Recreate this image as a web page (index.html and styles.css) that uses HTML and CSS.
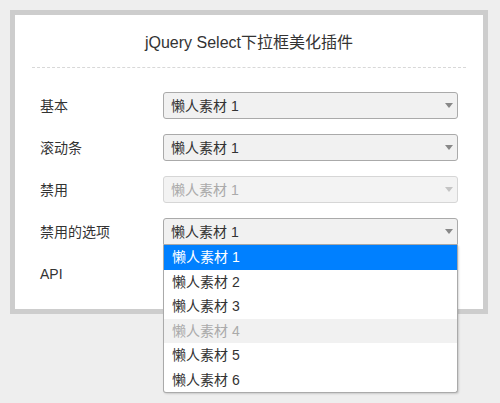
FILE: index.html
```html
<!DOCTYPE html>
<html lang="zh">
<head>
<meta charset="utf-8">
<title>jQuery Select下拉框美化插件</title>
<link rel="stylesheet" href="styles.css">
</head>
<body>
<div class="card">
  <h1 class="title">jQuery Select下拉框美化插件</h1>
  <div class="form">
    <div class="row">
      <span class="label">基本</span>
      <div class="select"><span class="value">懒人素材 1</span><span class="arrow"></span></div>
    </div>
    <div class="row">
      <span class="label">滚动条</span>
      <div class="select"><span class="value">懒人素材 1</span><span class="arrow"></span></div>
    </div>
    <div class="row">
      <span class="label">禁用</span>
      <div class="select disabled"><span class="value">懒人素材 1</span><span class="arrow"></span></div>
    </div>
    <div class="row">
      <span class="label">禁用的选项</span>
      <div class="select open"><span class="value">懒人素材 1</span><span class="arrow"></span>
        <ul class="options">
          <li class="option selected">懒人素材 1</li>
          <li class="option">懒人素材 2</li>
          <li class="option">懒人素材 3</li>
          <li class="option is-disabled">懒人素材 4</li>
          <li class="option">懒人素材 5</li>
          <li class="option">懒人素材 6</li>
        </ul>
      </div>
    </div>
    <div class="row">
      <span class="label">API</span>
    </div>
  </div>
</div>
</body>
</html>
```
FILE: styles.css
```css
html, body {
  margin: 0;
  padding: 0;
  background: #eeeeee;
  font-family: "Liberation Sans", Arial, "Noto Sans CJK SC", sans-serif;
  color: #333;
}
body {
  width: 500px;
  height: 403px;
  overflow: hidden;
}
.card {
  margin: 10px;
  width: 478px;
  height: 304px;
  box-sizing: border-box;
  border: 5px solid #cdcdcd;
  background: #fff;
}
.title {
  margin: 0 17px;
  padding: 18px 0 14px;
  font-size: 16px;
  font-weight: normal;
  line-height: 20px;
  text-align: center;
  color: #333;
  border-bottom: 1px dashed #d8d8d8;
}
.form {
  padding: 24px 25px 0 25px;
}
.row {
  display: flex;
  align-items: center;
  height: 27px;
  margin-bottom: 15px;
}
.label {
  width: 123px;
  font-size: 14px;
  line-height: 20px;
  color: #333;
}
.select {
  position: relative;
  width: 295px;
  height: 27px;
  box-sizing: border-box;
  border: 1px solid #aaa;
  border-radius: 3px;
  background: #f1f1f1;
  display: flex;
  align-items: center;
  padding-left: 7px;
  font-size: 14px;
  color: #333;
}
.select .value {
  flex: 1;
  line-height: 20px;
}
.arrow {
  width: 0;
  height: 0;
  margin-right: 4px;
  border-left: 4px solid transparent;
  border-right: 4px solid transparent;
  border-top: 5px solid #888;
}
.select.disabled {
  border-color: #d6d6d6;
  color: #aaa;
  background: #f3f3f3;
}
.select.disabled .arrow {
  border-top-color: #c4c4c4;
}
.select.open {
  border-radius: 3px 3px 0 0;
}
.options {
  position: absolute;
  left: -1px;
  top: 26px;
  width: 295px;
  box-sizing: border-box;
  margin: 0;
  padding: 0;
  list-style: none;
  background: #fff;
  border: 1px solid #aaa;
  border-top: none;
  border-radius: 0 0 3px 3px;
  box-shadow: 1px 1px 2px rgba(0, 0, 0, 0.15);
}
.option {
  height: 24.5px;
  line-height: 24.5px;
  padding-left: 8px;
  font-size: 14px;
  color: #333;
}
.option.selected {
  background: #0080ff;
  color: #fff;
}
.option.is-disabled {
  background: #f1f1f1;
  color: #aaa;
}
```
